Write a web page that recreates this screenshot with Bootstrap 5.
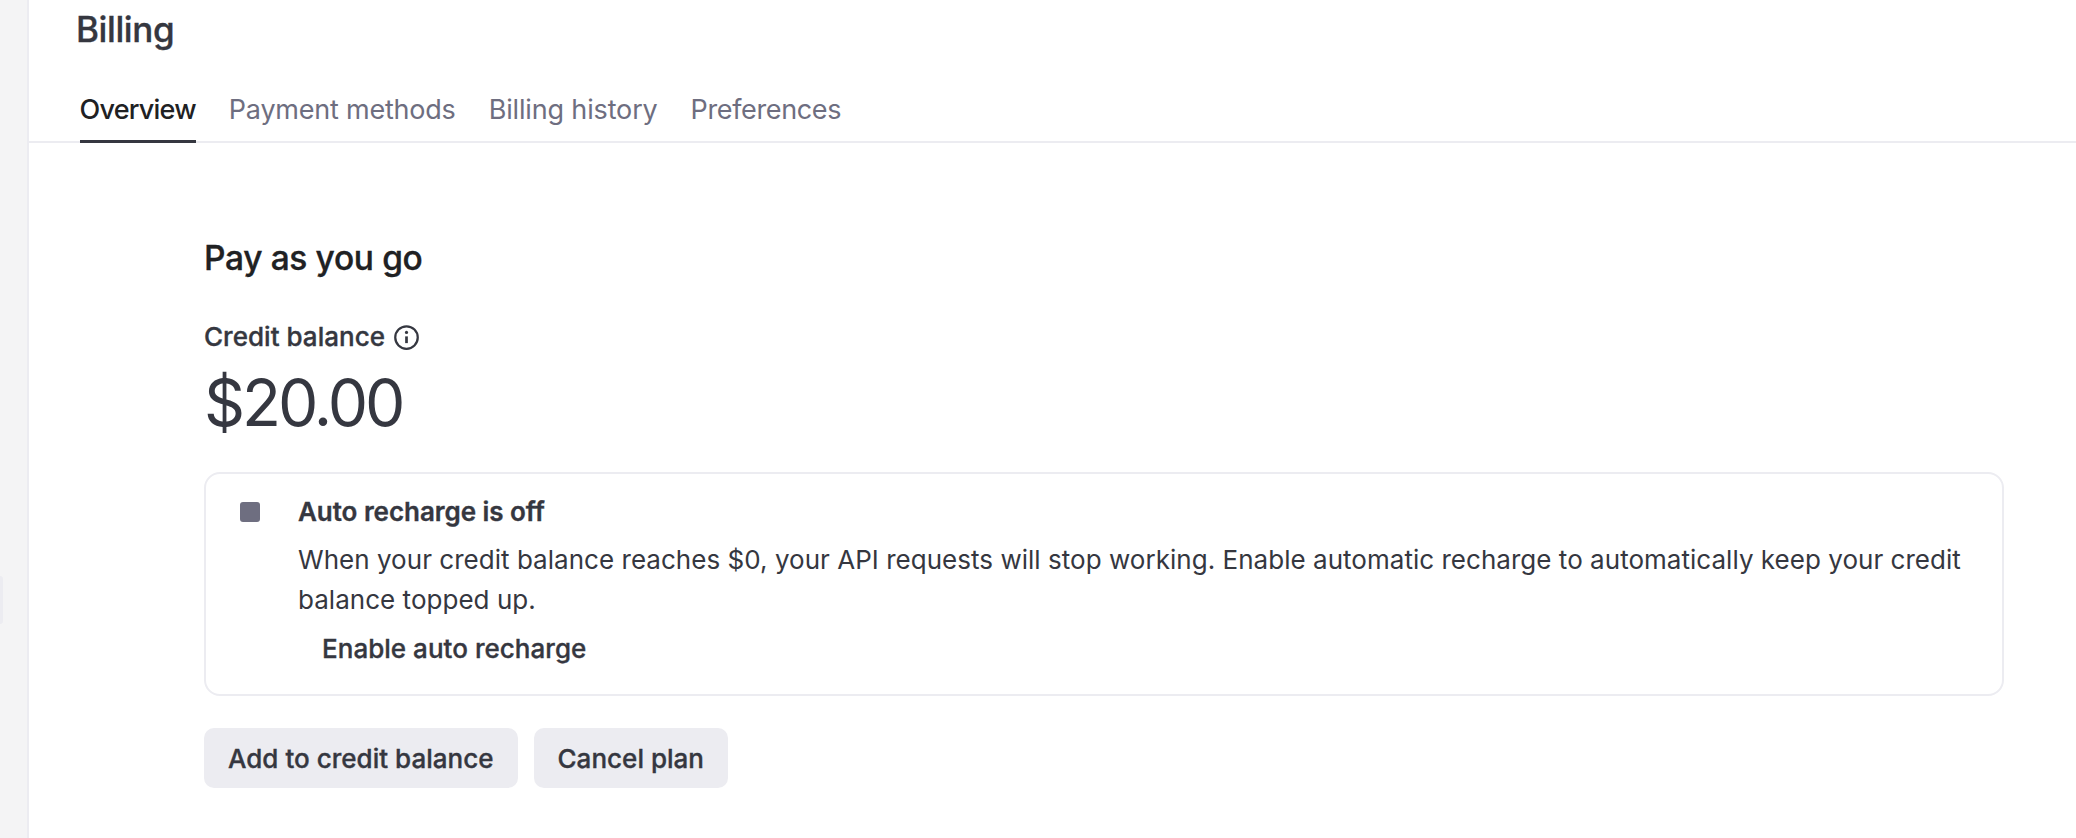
<!DOCTYPE html>
<html lang="en">
<head>
<meta charset="utf-8">
<title>Billing</title>
<link href="https://cdn.jsdelivr.net/npm/bootstrap@5.3.0/dist/css/bootstrap.min.css" rel="stylesheet">
<style>
html,body{height:100%;overflow:hidden}
body{font-family:Inter,"Liberation Sans",sans-serif;color:#353740;background:#fff;font-size:26px}
.shell{height:838px}
.side-rail{width:29px;flex:none;background:#f4f4f5;border-right:2px solid #ececf1;position:relative}
.rail-tab{position:absolute;left:0;top:576px;width:3px;height:48px;background:#ececf1;border-radius:0 4px 4px 0}
.page-title{font-size:35px;font-weight:500;margin:0;line-height:40px;padding:9px 0 0 47px;letter-spacing:-.4px}
.tab-row{margin-top:31px;padding-left:50.5px;gap:33px;border-bottom:2px solid #ececf1;height:63px}
.tab-item{color:#6e6e80;font-size:27px;line-height:40px;padding:10px 0 11px;margin-bottom:-2px;letter-spacing:-.22px;text-decoration:none}
.tab-item.on{color:#202123;border-bottom:3px solid #353740;font-weight:500;letter-spacing:-.78px}
.tab-item:nth-child(3){letter-spacing:-.15px}
.tab-item:nth-child(4){letter-spacing:-.36px}
.body-wrap{padding:0 72px 0 175px}
.sec-title{font-size:33.5px;font-weight:500;color:#202123;line-height:40px;margin:95px 0 0;letter-spacing:-.35px}
.bal-label{font-size:26px;font-weight:500;line-height:40px;margin-top:39px;letter-spacing:.03px}
.bal-num{font-size:64px;line-height:72px;margin-top:10px;letter-spacing:-3px}
.notice{margin-top:33px;border:2px solid #ececf1;border-radius:16px;height:224px;padding:18px 30px 0 34px;gap:38px}
.stop-mark{width:20px;height:20px;background:#6e6e80;border-radius:3px;flex:none;margin-top:10px}
.notice-title{font-weight:600;line-height:40px;letter-spacing:-.05px}
.notice-text{line-height:40px;margin:8px 0 0;letter-spacing:.03px}
.notice-link{font-weight:500;line-height:40px;margin-top:9px;padding-left:24px;letter-spacing:.03px}
.act-btn{background:#ececf1;border:0;color:#353740;font-size:26px;font-weight:500;height:60px;padding:0 24px;border-radius:10px;letter-spacing:.02px}
.act-btn:hover{background:#d9d9e3;color:#353740}
.act-row{margin-top:32px;gap:16px}
.page-title,.sec-title,.bal-label,.notice-link,.act-btn,.notice-title{-webkit-text-stroke:.35px currentColor}
</style>
</head>
<body>
<div class="d-flex shell">
  <aside class="side-rail"><span class="rail-tab"></span></aside>
  <main class="flex-grow-1">
    <h1 class="page-title">Billing</h1>
    <nav class="d-flex tab-row">
      <a class="tab-item on" href="#">Overview</a>
      <a class="tab-item" href="#">Payment methods</a>
      <a class="tab-item" href="#">Billing history</a>
      <a class="tab-item" href="#">Preferences</a>
    </nav>
    <section class="body-wrap">
      <h2 class="sec-title">Pay as you go</h2>
      <div class="bal-label d-flex align-items-center gap-2">Credit balance
        <svg width="27" height="27" viewBox="0 0 24 24" fill="none" stroke="#353740" stroke-width="2"><circle cx="12" cy="12" r="10"/><path d="M12 11v6" stroke-width="2.4"/><circle cx="12" cy="7.5" r="1.4" fill="#353740" stroke="none"/></svg>
      </div>
      <div class="bal-num">$20.00</div>
      <div class="notice d-flex">
        <span class="stop-mark"></span>
        <div>
          <div class="notice-title">Auto recharge is off</div>
          <p class="notice-text">When your credit balance reaches $0, your API requests will stop working. Enable automatic recharge to automatically keep your credit balance topped up.</p>
          <div class="notice-link">Enable auto recharge</div>
        </div>
      </div>
      <div class="d-flex act-row">
        <button class="btn act-btn" type="button">Add to credit balance</button>
        <button class="btn act-btn" type="button">Cancel plan</button>
      </div>
    </section>
  </main>
</div>
<script src="https://cdn.jsdelivr.net/npm/bootstrap@5.3.0/dist/js/bootstrap.bundle.min.js"></script>
</body>
</html>
